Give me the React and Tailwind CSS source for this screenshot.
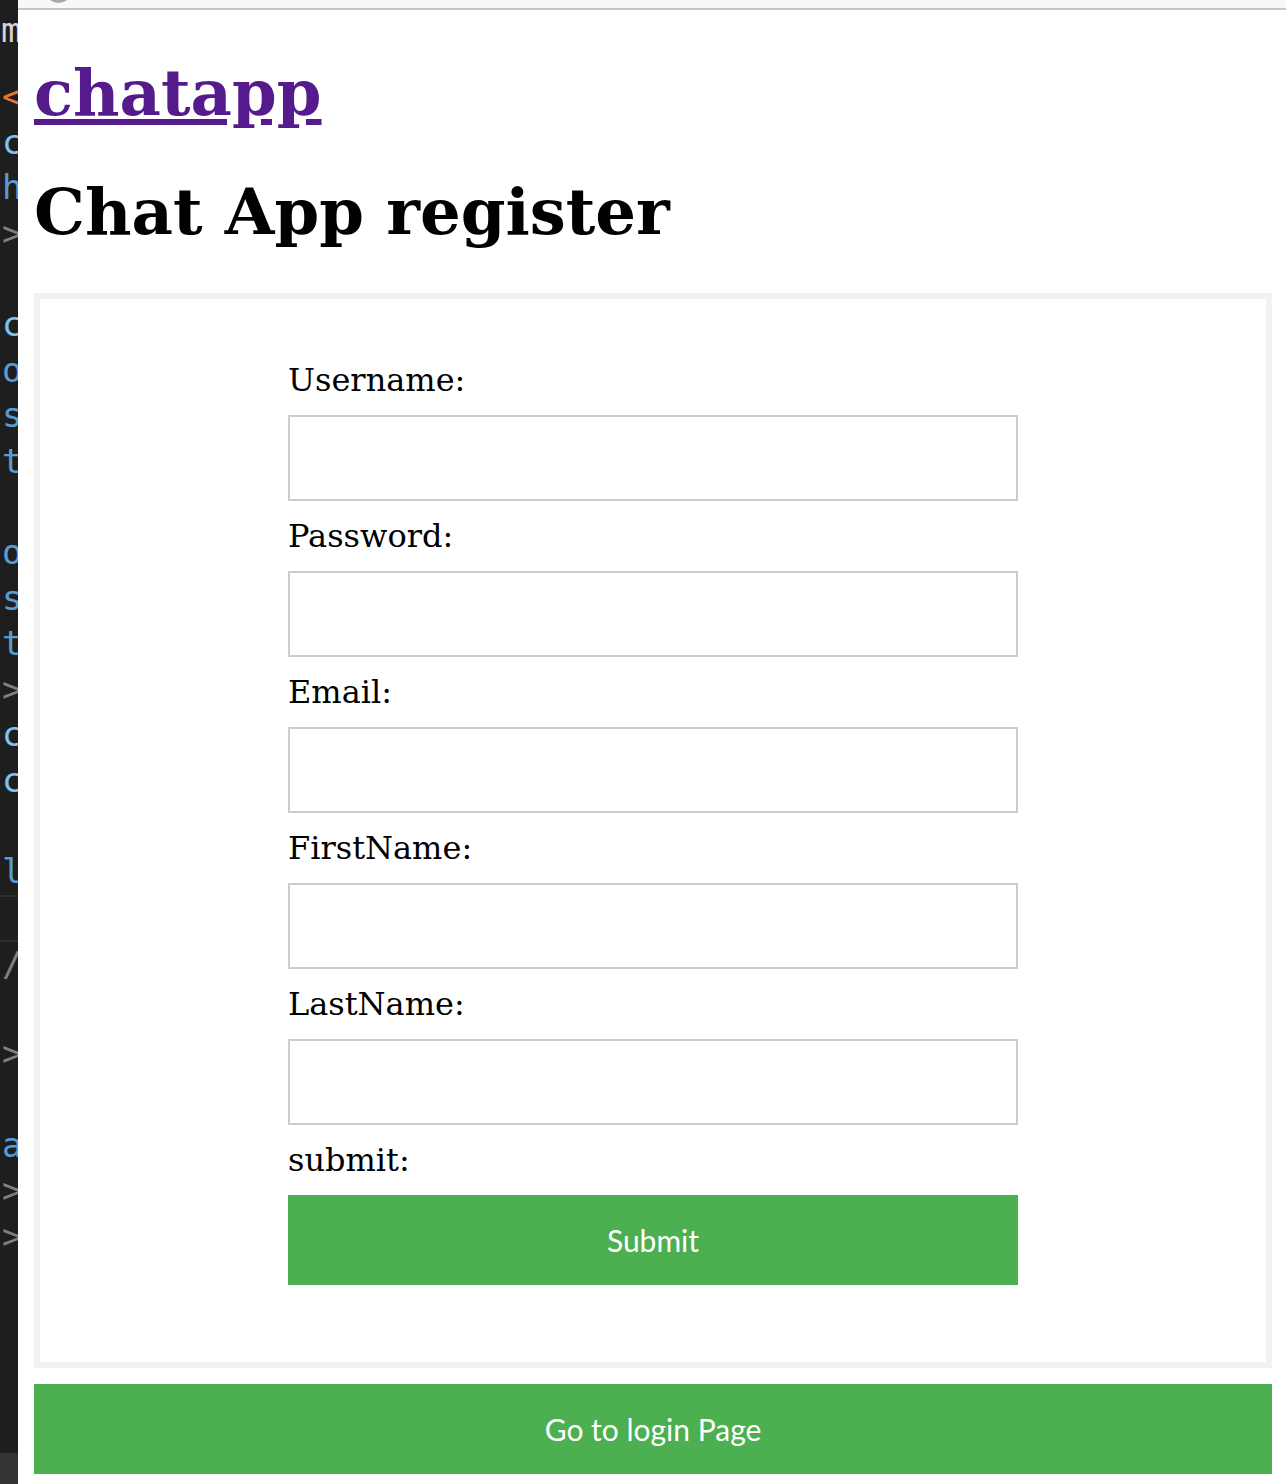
import React from 'react';

// bits of the code editor peeking out on the left edge, one entry per editor line
const EDITOR_LINES = [
    ['<', 'text-[#e37933]'],
    ['c', 'text-[#7cc4f4]'],
    ['h', 'text-[#569cd6]'],
    ['>', 'text-[#808080]'],
    ['', ''],
    ['c', 'text-[#7cc4f4]'],
    ['o', 'text-[#569cd6]'],
    ['s', 'text-[#569cd6]'],
    ['t', 'text-[#569cd6]'],
    ['', ''],
    ['o', 'text-[#569cd6]'],
    ['s', 'text-[#569cd6]'],
    ['t', 'text-[#569cd6]'],
    ['>', 'text-[#808080]'],
    ['c', 'text-[#7cc4f4]'],
    ['c', 'text-[#7cc4f4]'],
    ['', ''],
    ['l', 'text-[#569cd6]'],
    ['', 'border-t-2 border-[#2e2e2e]'],
    ['/', 'text-[#808080] border-t-2 border-[#2e2e2e]'],
    ['', ''],
    ['>', 'text-[#808080]'],
    ['', ''],
    ['a', 'text-[#569cd6]'],
    ['>', 'text-[#808080]'],
    ['>', 'text-[#808080]'],
];

const FIELDS = ['Username', 'Password', 'Email', 'FirstName', 'LastName'];

function EditorStrip() {
    return (
        <div className="flex w-[18px] shrink-0 flex-col overflow-hidden bg-[#1e1e1e] font-['DejaVu_Sans_Mono',monospace] text-[34px]">
            <div className="h-[60px] whitespace-nowrap pl-[1px] leading-[60px] text-[#d4d4d4]">m</div>
            <div className="h-[14px]" />
            {EDITOR_LINES.map(([ch, cls], i) => (
                <div key={i} className={`h-[45.6px] whitespace-nowrap pl-[2px] leading-[45.6px] ${cls}`}>
                    {ch}
                </div>
            ))}
            <div className="mt-auto h-[31px] bg-[#333333]" />
        </div>
    );
}

export default function App() {
    return (
        <div className="flex min-h-[1484px] bg-white">
            <EditorStrip />

            <div className="flex min-w-0 flex-1 flex-col">
                {/* browser chrome edge */}
                <div className="relative h-[10px] overflow-hidden border-b-2 border-[#c4c4c4] bg-[#f8f8f8]">
                    <div className="absolute left-[27px] top-[-24px] h-[27px] w-[27px] rounded-full border-b-[3px] border-[#a8a8a8]" />
                </div>

                <main className="pl-4 pr-[14px] font-['DejaVu_Serif',serif] text-black">
                    <a
                        href="#"
                        className="mt-[45px] inline-block text-[64px] font-bold leading-[76px] text-[#551a8b] underline"
                    >
                        chatapp
                    </a>

                    <h1 className="mt-[43px] text-[64px] font-bold leading-[76px]">Chat App register</h1>

                    <div className="mt-[43px] border-[6px] border-[#f2f2f2] pt-[62px] pb-[61px]">
                        <form className="mx-auto w-[730px]" onSubmit={(e) => e.preventDefault()}>
                            {FIELDS.map((name) => (
                                <div key={name}>
                                    <label className="block text-[32px] leading-[38px]">{name}:</label>
                                    <input
                                        type={name === 'Password' ? 'password' : 'text'}
                                        className="my-4 block h-[86px] w-full border-2 border-[#cccccc] bg-white px-10 outline-none"
                                    />
                                </div>
                            ))}
                            <label className="block text-[32px] leading-[38px]">submit:</label>
                            <button
                                type="submit"
                                className="my-4 block h-[90px] w-full bg-[#4caf50] font-['Lato',sans-serif] text-[30px] text-white"
                            >
                                Submit
                            </button>
                        </form>
                    </div>

                    <button className="mt-4 block h-[90px] w-full bg-[#4caf50] font-['Lato',sans-serif] text-[30px] text-white">
                        Go to login Page
                    </button>
                </main>
            </div>
        </div>
    );
}
